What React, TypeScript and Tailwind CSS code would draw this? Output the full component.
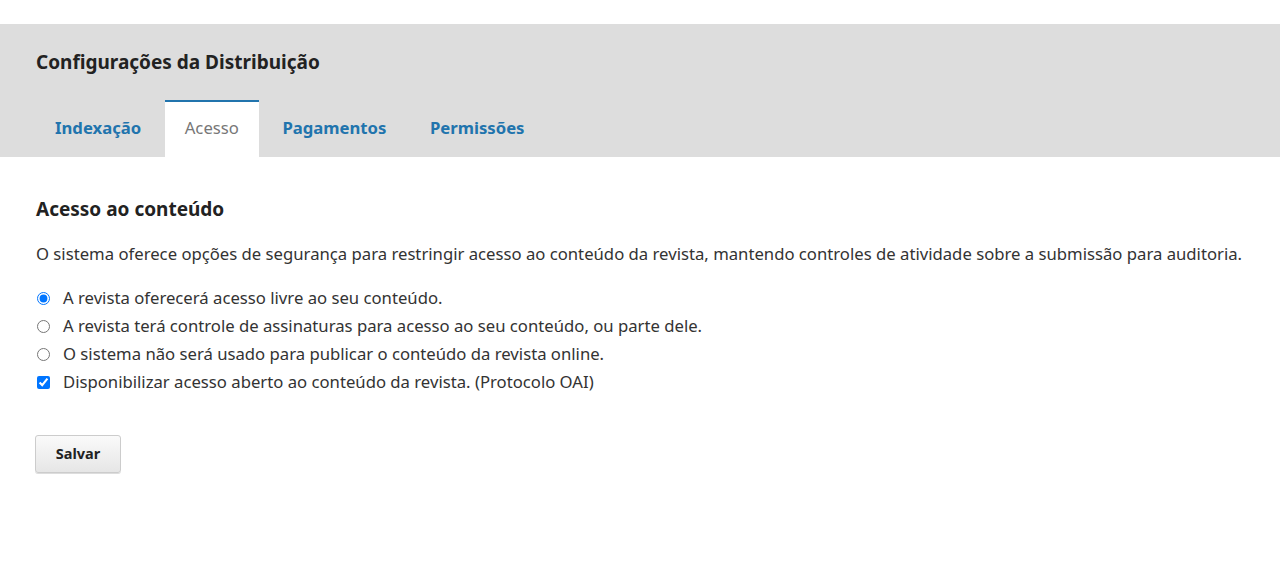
import React, { useState } from "react";

const tabs = ["Indexação", "Acesso", "Pagamentos", "Permissões"];

const options = [
  "A revista oferecerá acesso livre ao seu conteúdo.",
  "A revista terá controle de assinaturas para acesso ao seu conteúdo, ou parte dele.",
  "O sistema não será usado para publicar o conteúdo da revista online.",
];

export default function App() {
  const [active, setActive] = useState("Acesso");
  const [choice, setChoice] = useState(0);
  const [oai, setOai] = useState(true);

  return (
    <div className="min-h-[576px] bg-white pt-6 text-[#333] font-['Noto_Sans',sans-serif]">
      <div className="bg-[#ddd]">
        <h1 className="px-9 pt-[26px] pb-[26px] text-[19px] leading-6 font-bold text-[#222]">
          Configurações da Distribuição
        </h1>
        <div className="flex gap-[3.5px] px-[35px]">
          {tabs.map((t) => (
            <button
              key={t}
              onClick={() => setActive(t)}
              className={
                t === active
                  ? "h-[57px] border-t-2 border-[#2174ad] bg-white px-5 pb-[3px] text-[16.7px] text-[#777]"
                  : "h-[57px] border-t-2 border-transparent px-5 pb-[3px] text-[16.7px] font-bold text-[#2174ad]"
              }
            >
              {t}
            </button>
          ))}
        </div>
      </div>

      <div className="px-9 pt-[40px]">
        <h2 className="text-[19px] leading-6 font-bold text-[#222]">Acesso ao conteúdo</h2>
        <p className="mt-[21px] text-[16.7px] leading-6">
          O sistema oferece opções de segurança para restringir acesso ao conteúdo da revista, mantendo controles de atividade sobre a submissão para auditoria.
        </p>

        <div className="mt-[18px] flex flex-col text-[16.7px]">
          {options.map((o, i) => (
            <label key={o} className="flex h-7 items-center gap-[13px]">
              <input
                type="radio"
                name="access"
                checked={choice === i}
                onChange={() => setChoice(i)}
                className="m-0 ml-[1px] h-[13px] w-[13px]"
              />
              {o}
            </label>
          ))}
          <label className="flex h-7 items-center gap-[13px]">
            <input
              type="checkbox"
              checked={oai}
              onChange={() => setOai(!oai)}
              className="m-0 ml-[1px] h-[13px] w-[13px]"
            />
            Disponibilizar acesso aberto ao conteúdo da revista. (Protocolo OAI)
          </label>
        </div>

        <button className="mt-[39px] -ml-px h-[38px] w-[86px] rounded-[3px] border border-[#ccc] bg-gradient-to-b from-[#fafafa] to-[#e6e6e6] text-[14.5px] font-bold text-[#222] shadow-[0_1px_0_#ddd]">
          Salvar
        </button>
      </div>
    </div>
  );
}
